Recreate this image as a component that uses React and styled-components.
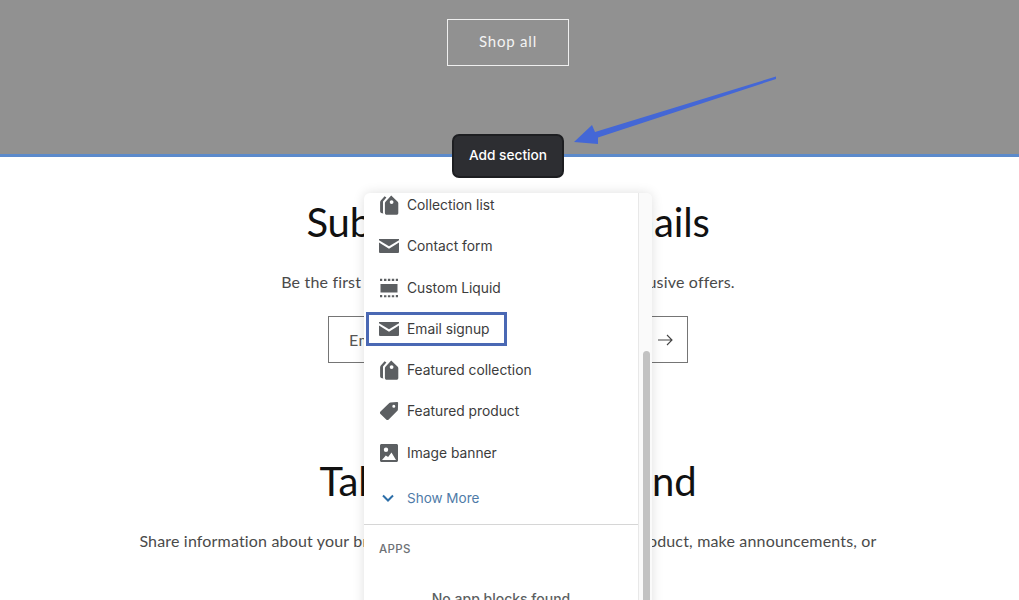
import React from 'react';
import styled, { createGlobalStyle } from 'styled-components';

const GlobalStyle = createGlobalStyle`
  html, body {
    margin: 0;
    padding: 0;
    background: #fff;
    overflow: hidden;
  }
  * {
    box-sizing: border-box;
  }
`;

const Page = styled.div`
  position: relative;
  width: 1019px;
  height: 600px;
  overflow: hidden;
  font-family: Lato, "Noto Sans", sans-serif;
  color: #1a1a1a;
`;

const Hero = styled.section`
  height: 157px;
  padding: 19px 3px 0 0;
  display: flex;
  justify-content: center;
  align-items: flex-start;
  background: #919191;
  border-bottom: 3px solid #5c8acb;
`;

const ShopAll = styled.a`
  width: 122px;
  height: 47px;
  padding-bottom: 3px;
  display: flex;
  align-items: center;
  justify-content: center;
  border: 1.5px solid #efefef;
  color: #f4f4f4;
  font-size: 15px;
  letter-spacing: 0.8px;
`;

const Section = styled.section`
  display: flex;
  flex-direction: column;
  align-items: center;
  padding: ${(p) => p.$top}px 3px 0 0;
`;

const Heading = styled.h2`
  margin: 0;
  font-size: 40px;
  line-height: 50px;
  font-weight: 400;
  color: #111;
  letter-spacing: -0.15px;
`;

const Lead = styled.p`
  margin: 0;
  padding-top: ${(p) => p.$top}px;
  font-size: 16px;
  line-height: 24px;
  letter-spacing: 0.17px;
  color: #4a4a4a;
  white-space: nowrap;
`;

const EmailField = styled.div`
  width: 360px;
  height: 47px;
  margin-top: 22px;
  padding: 0 14px 0 20px;
  display: flex;
  align-items: center;
  justify-content: space-between;
  border: 1px solid #757575;
  font-size: 16px;
  letter-spacing: 0.5px;
  color: #555;
`;

const ArrowIcon = styled.svg`
  width: 16px;
  height: 12px;
  fill: none;
  stroke: #444;
  stroke-width: 1.1;
`;

const AddSection = styled.button`
  position: absolute;
  left: 452px;
  top: 134px;
  width: 112px;
  height: 44px;
  padding: 0 0 2px;
  border: 2px solid #1d1e21;
  border-radius: 7px;
  background: #2d2e32;
  color: #fff;
  font-family: Inter, "Liberation Sans", sans-serif;
  font-size: 13.7px;
  font-weight: 500;
`;

const Callout = styled.svg`
  position: absolute;
  left: 570px;
  top: 70px;
  width: 210px;
  height: 80px;
`;

const Popover = styled.div`
  position: absolute;
  left: 364px;
  top: 193px;
  width: 288px;
  height: 420px;
  overflow: hidden;
  display: flex;
  background: #fff;
  border-radius: 6px 6px 0 0;
  box-shadow: 0 0 12px rgba(0, 0, 0, 0.13);
  font-family: Inter, "Liberation Sans", sans-serif;
`;

const Panel = styled.div`
  width: 275px;
  flex: none;
  border-right: 1px solid #e8e8e8;
`;

const Gutter = styled.div`
  flex: 1;
  padding: 158px 2px 0 4px;
  background: #fafafa;
`;

const Thumb = styled.div`
  height: 260px;
  border-radius: 4px;
  background: #c2c2c2;
`;

const List = styled.ul`
  list-style: none;
  margin: -4.5px 0 0;
  padding: 0 0 0 2px;
  display: flex;
  flex-direction: column;
  gap: 7.3px;
`;

const Row = styled.li`
  width: 141px;
  height: 34px;
  padding: 0 0 1px 13px;
  display: flex;
  align-items: center;
  gap: 8px;
  white-space: nowrap;
  font-size: 13.8px;
  color: #3c3c3c;
  outline: ${(p) => (p.$focused ? '3px solid #4a68b4' : 'none')};
  outline-offset: -3px;
`;

const RowIcon = styled.svg`
  width: 20px;
  height: 20px;
  flex: none;
  fill: #5c5f62;
`;

const ShowMore = styled.div`
  height: 34px;
  margin-top: 10.5px;
  padding-left: 15px;
  display: flex;
  align-items: center;
  gap: 10px;
  font-size: 13.5px;
  color: #4f7ba8;
`;

const Chevron = styled.svg`
  width: 18px;
  height: 18px;
  fill: none;
  stroke: #2c6ea8;
  stroke-width: 2;
`;

const Divider = styled.hr`
  margin: 9px 0 0;
  border: 0;
  border-top: 1px solid #d6d6d6;
`;

const GroupTitle = styled.div`
  padding: 17px 0 0 15px;
  font-size: 11.5px;
  line-height: 14px;
  font-weight: 500;
  letter-spacing: 0.4px;
  color: #6d7175;
`;

const EmptyNote = styled.div`
  padding-top: 34px;
  text-align: center;
  font-size: 14px;
  font-weight: 500;
  color: #5c5f62;
`;

const TagsIcon = () => (
  <RowIcon viewBox="0 0 20 20">
    <path d="M5.600 1.200 7.400 2.400 4 6.400V17c0 .6.100 1 .4 1.500C2.800 18.400 1.100 17.800 1.100 16.200V7.600c0-.8.200-1.400.7-2z" />
    <path fillRule="evenodd" d="M12.200.4 18.700 6.700c.4.400.6.900.6 1.500V18c0 1-.8 1.800-1.800 1.800H7.700C6.700 19.800 5.900 19 5.900 18V8.200c0-.6.200-1.100.6-1.500zM12.600 5.200a1.900 1.900 0 1 0 0 3.800 1.900 1.900 0 0 0 0-3.800z" />
  </RowIcon>
);

const MailIcon = () => (
  <RowIcon viewBox="0 0 20 20">
    <path d="M0 3h20v1.200l-10 6.100L0 4.200z" />
    <path d="M0 6.600 10 12.700l10-6.100V16a1 1 0 0 1-1 1H1a1 1 0 0 1-1-1z" />
  </RowIcon>
);

const LiquidIcon = () => (
  <RowIcon viewBox="0 0 20 20">
    <path d="M1.500 6h17v8.500h-17z" />
    <path d="M1 .8h2.200v2.200H1zM5 .8h2.400V3H5zM8.900.8h2.400V3H8.900zM12.800.8h2.400V3h-2.400zM16.800.8H19V3h-2.200zM1 17h2.200v2.200H1zM5 17.200h2.400v2H5zM8.900 17.200h2.400v2H8.900zM12.800 17.200h2.400v2h-2.400zM16.800 17H19v2.200h-2.200z" />
  </RowIcon>
);

const TagIcon = () => (
  <RowIcon viewBox="0 0 20 20">
    <path fillRule="evenodd" d="M11.500 1.500 18 1c.6 0 1.100.4 1.100 1l-.2 6.600c0 .5-.2.9-.5 1.200l-8.700 8.700c-.7.700-1.800.7-2.500 0L1.500 12.900c-.7-.7-.7-1.800 0-2.500l8.800-8.400c.3-.3.700-.5 1.200-.5zM14.800 3.700a1.500 1.500 0 1 0 0 3 1.500 1.500 0 0 0 0-3z" />
  </RowIcon>
);

const ImageIcon = () => (
  <RowIcon viewBox="0 0 20 20">
    <path fillRule="evenodd" d="M2.500 1h15C18.300 1 19 1.700 19 2.500v15c0 .8-.7 1.500-1.500 1.500h-15C1.700 19 1 18.300 1 17.500v-15C1 1.700 1.700 1 2.500 1zM7 4.500a2.200 2.200 0 1 0 0 4.400 2.200 2.200 0 0 0 0-4.400zM3 17h14l-4.500-7.500-3.400 4.600-2.300-1.700z" />
  </RowIcon>
);

const sections = [
  { label: 'Collection list', Icon: TagsIcon },
  { label: 'Contact form', Icon: MailIcon },
  { label: 'Custom Liquid', Icon: LiquidIcon },
  { label: 'Email signup', Icon: MailIcon, focused: true },
  { label: 'Featured collection', Icon: TagsIcon },
  { label: 'Featured product', Icon: TagIcon },
  { label: 'Image banner', Icon: ImageIcon },
];

const App = () => (
  <Page>
    <GlobalStyle />
    <Hero>
      <ShopAll>Shop all</ShopAll>
    </Hero>

    <Section $top={40}>
      <Heading>Subscribe to our emails</Heading>
      <Lead $top={23}>Be the first to know about new collections and exclusive offers.</Lead>
      <EmailField>
        Email
        <ArrowIcon viewBox="0 0 16 12">
          <path d="M1 6h14M10 1l5 5-5 5" />
        </ArrowIcon>
      </EmailField>
    </Section>

    <Section $top={93}>
      <Heading>Talk about your brand</Heading>
      <Lead $top={23}>Share information about your brand with your customers. Describe a product, make announcements, or</Lead>
    </Section>

    <Callout viewBox="0 0 210 80">
      <path d="M206 6.500V9L28 67.500 28 74 4 72 22 55 25 62z" fill="#4467d6" />
    </Callout>

    <AddSection>Add section</AddSection>

    <Popover>
      <Panel>
        <List>
          {sections.map(({ label, Icon, focused }) => (
            <Row key={label} $focused={focused}>
              <Icon />
              {label}
            </Row>
          ))}
        </List>
        <ShowMore>
          <Chevron viewBox="0 0 18 18">
            <path d="M4 6.500 9 11.500l5-5" />
          </Chevron>
          Show More
        </ShowMore>
        <Divider />
        <GroupTitle>APPS</GroupTitle>
        <EmptyNote>No app blocks found</EmptyNote>
      </Panel>
      <Gutter>
        <Thumb />
      </Gutter>
    </Popover>
  </Page>
);

export default App;
